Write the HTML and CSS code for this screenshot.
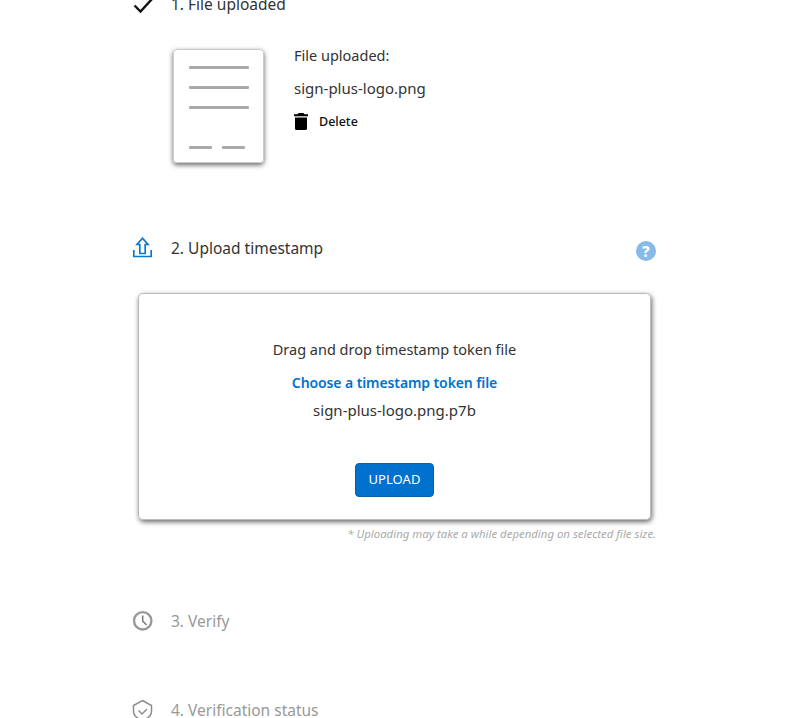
FILE: index.html
```html
<!DOCTYPE html>
<html lang="en">
<head>
  <meta charset="UTF-8">
  <meta name="viewport" content="width=device-width, initial-scale=1.0">
  <title>Verify timestamp</title>
  <link rel="stylesheet" href="styles.css">
</head>
<body>
  <main class="steps">
    <section class="step step-done">
      <div class="step-head">
        <svg class="step-icon" width="22" height="22" viewBox="0 0 22 22"><path d="M2.5 12.5l6 6L20.5 5.500" fill="none" stroke="#111" stroke-width="2.4"/></svg>
        <h2>1. File uploaded</h2>
      </div>
      <div class="file-info">
        <div class="file-sheet">
          <span class="line"></span>
          <span class="line"></span>
          <span class="line"></span>
          <div class="sign-lines">
            <span class="line short"></span>
            <span class="line short"></span>
          </div>
        </div>
        <div class="file-text">
          <p>File uploaded:</p>
          <p class="file-name">sign-plus-logo.png</p>
          <a class="delete" href="#">
            <svg width="14" height="17" viewBox="0 0 14 17"><path d="M4.5 0h5l1 1.2H14v2H0v-2h3.5zM1 4.5h12V15.5a1.5 1.5 0 0 1-1.5 1.5h-9A1.5 1.5 0 0 1 1 15.5z" fill="#000"/></svg>
            Delete
          </a>
        </div>
      </div>
    </section>

    <section class="step step-upload">
      <div class="step-head">
        <svg class="step-icon" width="22" height="22" viewBox="0 0 22 22"><path d="M10.5 1.2L5 7.5H7.8V16.5H13.2V7.5H16z" fill="none" stroke="#0a78cf" stroke-width="1.7"/><path d="M1.8 13V19.5H19.2V13" fill="none" stroke="#0a78cf" stroke-width="1.7"/></svg>
        <h2>2. Upload timestamp</h2>
        <span class="help">?</span>
      </div>
      <div class="drop-card">
        <p class="drop-title">Drag and drop timestamp token file</p>
        <a class="choose" href="#">Choose a timestamp token file</a>
        <p class="chosen">sign-plus-logo.png.p7b</p>
        <button class="upload-btn">UPLOAD</button>
      </div>
      <p class="note">* Uploading may take a while depending on selected file size.</p>
    </section>

    <section class="step step-off step-verify">
      <div class="step-head">
        <svg class="step-icon" width="22" height="22" viewBox="0 0 22 22"><circle cx="10.7" cy="10.8" r="8.7" fill="none" stroke="#999" stroke-width="2.4"/><path d="M10.7 5.5V11L14.5 15" fill="none" stroke="#777" stroke-width="1.5"/></svg>
        <h2>3. Verify</h2>
      </div>
    </section>

    <section class="step step-off step-status">
      <div class="step-head">
        <svg class="step-icon" width="22" height="22" viewBox="0 0 22 22"><path d="M10.5 1.5L19.5 6.5V12C19.5 16 16 19.5 10.5 21C5 19.5 1.5 16 1.5 12V6.5z" fill="none" stroke="#8e8e8e" stroke-width="1.5"/><path d="M6.5 11.5l3.5 3.5 5-5" fill="none" stroke="#8e8e8e" stroke-width="1.5"/></svg>
        <h2>4. Verification status</h2>
      </div>
    </section>
  </main>
</body>
</html>
```

FILE: styles.css
```css
html, body {
  height: 718px;
  overflow: hidden;
}

body {
  margin: 0;
  background: #fff;
  color: #333;
  font-family: "Noto Sans", sans-serif;
  font-size: 14.5px;
}

p {
  margin: 0;
}

.steps {
  width: 524px;
  margin: -7px 0 0 132px;
}

.step-head {
  display: flex;
  align-items: center;
  gap: 17px;
  height: 22px;
}

.step-icon {
  flex: none;
}

.step-head h2 {
  margin: 0;
  padding-bottom: 1px;
  font-size: 15.5px;
  font-weight: 400;
}

.file-info {
  display: flex;
  gap: 30px;
  margin: 34px 0 0 41px;
}

.file-sheet {
  width: 91px;
  height: 114px;
  box-sizing: border-box;
  padding: 16px 14px 0 15px;
  border-radius: 4px;
  border: 1px solid #ccc;
  box-shadow: 0 2px 5px rgba(0, 0, 0, 0.6);
}

.line {
  display: block;
  height: 3px;
  margin-bottom: 17px;
  background: #aaa;
  border-radius: 1px;
}

.sign-lines {
  display: flex;
  gap: 10px;
  margin-top: 37px;
}

.line.short {
  width: 23px;
}

.file-text p {
  margin-bottom: 13px;
  line-height: 20px;
}

.file-text p:first-child {
  margin-top: -4px;
}

.file-text .file-name {
  font-size: 15px;
  margin-bottom: 15px;
}

.delete {
  display: flex;
  align-items: center;
  gap: 11px;
  color: #111;
  font-size: 12.5px;
  font-weight: 500;
  text-decoration: none;
}

.step-upload {
  margin-top: 74px;
}

.help {
  width: 20px;
  height: 20px;
  margin: 6px 0 0 auto;
  border-radius: 50%;
  background: #85bbe6;
  color: #fff;
  font-size: 15px;
  font-weight: 800;
  line-height: 20px;
  text-align: center;
}

.drop-card {
  display: flex;
  flex-direction: column;
  align-items: center;
  width: 513px;
  height: 227px;
  box-sizing: border-box;
  margin: 34px 0 0 6px;
  padding-top: 45px;
  border-radius: 5px;
  border: 1px solid #bbb;
  box-shadow: 1px 2px 5px rgba(0, 0, 0, 0.6);
}

.drop-title {
  line-height: 20px;
}

.choose {
  margin-top: 14px;
  color: #0072ce;
  font-size: 14px;
  font-weight: 600;
  letter-spacing: -0.1px;
  line-height: 20px;
  text-decoration: none;
}

.chosen {
  margin-top: 7px;
  font-size: 15px;
  line-height: 20px;
}

.upload-btn {
  width: 79px;
  height: 34px;
  margin-top: 43px;
  padding: 0 0 2px;
  border: 1px solid #0b5fa5;
  border-radius: 4px;
  background: #0072ce;
  color: #fff;
  font-family: "Noto Sans", sans-serif;
  font-size: 13px;
  letter-spacing: 0.1px;
}

.note {
  margin-top: 6px;
  color: #aaa;
  font-size: 11.4px;
  font-style: italic;
  text-align: right;
}

.step-off h2 {
  color: #999;
}

.step-verify {
  margin-top: 69px;
}

.step-status {
  margin-top: 67px;
}
```
